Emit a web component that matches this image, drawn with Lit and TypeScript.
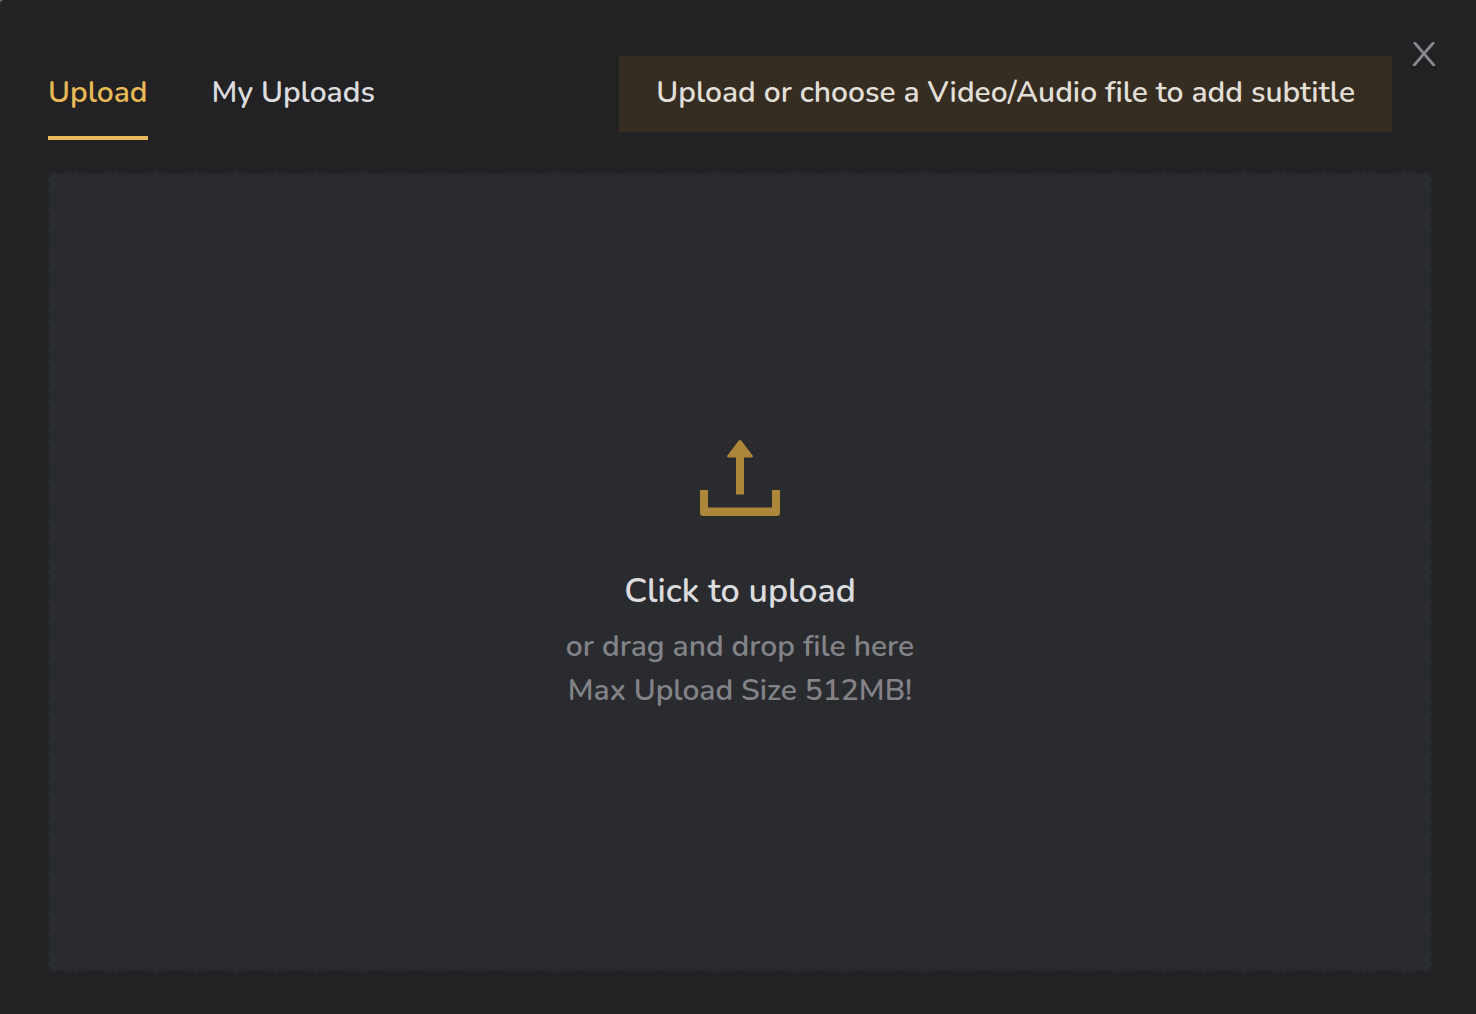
import { LitElement, html, css } from "lit";
import { customElement, state } from "lit/decorators.js";

type Tab = "upload" | "library";

@customElement("app-root")
export class AppRoot extends LitElement {
  static styles = css`
    :host {
      display: block;
      background: #77787a;
      font-family: Nunito, "Noto Sans", sans-serif;
      font-size: 30px;
      font-weight: 600;
      font-variant-ligatures: none;
      line-height: 44px;
      color: #dcdcdf;
    }
    .dialog {
      box-sizing: border-box;
      min-height: 100vh;
      display: flex;
      flex-direction: column;
      padding-bottom: 42px;
      background: #222224;
      border-top-left-radius: 4px;
    }
    .header {
      display: flex;
      align-items: flex-start;
      gap: 20px;
      padding: 40px 40px 32px 48px;
    }
    .tabs {
      display: flex;
      gap: 64px;
      padding-top: 31px;
      margin-right: auto;
    }
    button {
      margin: 0;
      padding: 0;
      border: 0;
      background: none;
      font: inherit;
      color: inherit;
      cursor: pointer;
    }
    .tab {
      padding-bottom: 21px;
      border-bottom: 4px solid transparent;
    }
    .tab.active {
      color: #e9b955;
      border-bottom-color: #e9b95c;
    }
    .hint {
      margin: 16px 0 0;
      padding: 15px 37px 17px;
      background: #352d22;
      color: #e2dfd8;
    }
    .close {
      display: flex;
      padding-top: 2px;
    }
    .close svg {
      width: 24px;
      height: 24px;
    }
    .drop {
      flex: 1;
      display: flex;
      flex-direction: column;
      align-items: center;
      justify-content: center;
      margin: 0 44px 0 48px;
      padding-top: 10px;
      border: 2px dashed #222529;
      background: #2a2b2f;
      text-align: center;
      cursor: pointer;
    }
    .file {
      width: 1px;
      height: 1px;
      opacity: 0;
    }
    .icon {
      width: 80px;
      height: 76px;
      margin-bottom: 51px;
    }
    .title {
      font-size: 34px;
      line-height: 48px;
      margin-bottom: 10px;
    }
    .note {
      color: #838387;
    }
  `;

  @state() private tab: Tab = "upload";

  private renderTab(id: Tab, label: string) {
    return html`<button
      class="tab ${this.tab === id ? "active" : ""}"
      role="tab"
      aria-selected=${this.tab === id}
      @click=${() => (this.tab = id)}
    >${label}</button>`;
  }

  render() {
    return html`
      <main class="dialog">
        <header class="header">
          <div class="tabs" role="tablist">
            ${this.renderTab("upload", "Upload")}
            ${this.renderTab("library", "My Uploads")}
          </div>
          <p class="hint">Upload or choose a Video/Audio file to add subtitle</p>
          <button class="close" aria-label="Close">
            <svg viewBox="0 0 24 24" fill="none" stroke="#89898d" stroke-width="2.8">
              <path d="M2 0L22.5 24M22 0L1.5 24" />
            </svg>
          </button>
        </header>
        <label class="drop" for="media">
          <svg class="icon" viewBox="0 0 80 76" fill="#ac873a" aria-hidden="true">
            <path d="M38.6 .8Q40 -.6 41.4 .8L52.6 15.4Q53.4 17.4 51.5 17.4H44V54.5H36V17.4H28.5Q26.6 17.4 27.4 15.4Z" />
            <path d="M0 50H8V67.5H72V50H80V73Q80 76 77 76H3Q0 76 0 73Z" />
          </svg>
          <span class="title">Click to upload</span>
          <span class="note">or drag and drop file here</span>
          <span class="note">Max Upload Size 512MB!</span>
          <input class="file" id="media" type="file" accept="video/*,audio/*" />
        </label>
      </main>
    `;
  }
}
